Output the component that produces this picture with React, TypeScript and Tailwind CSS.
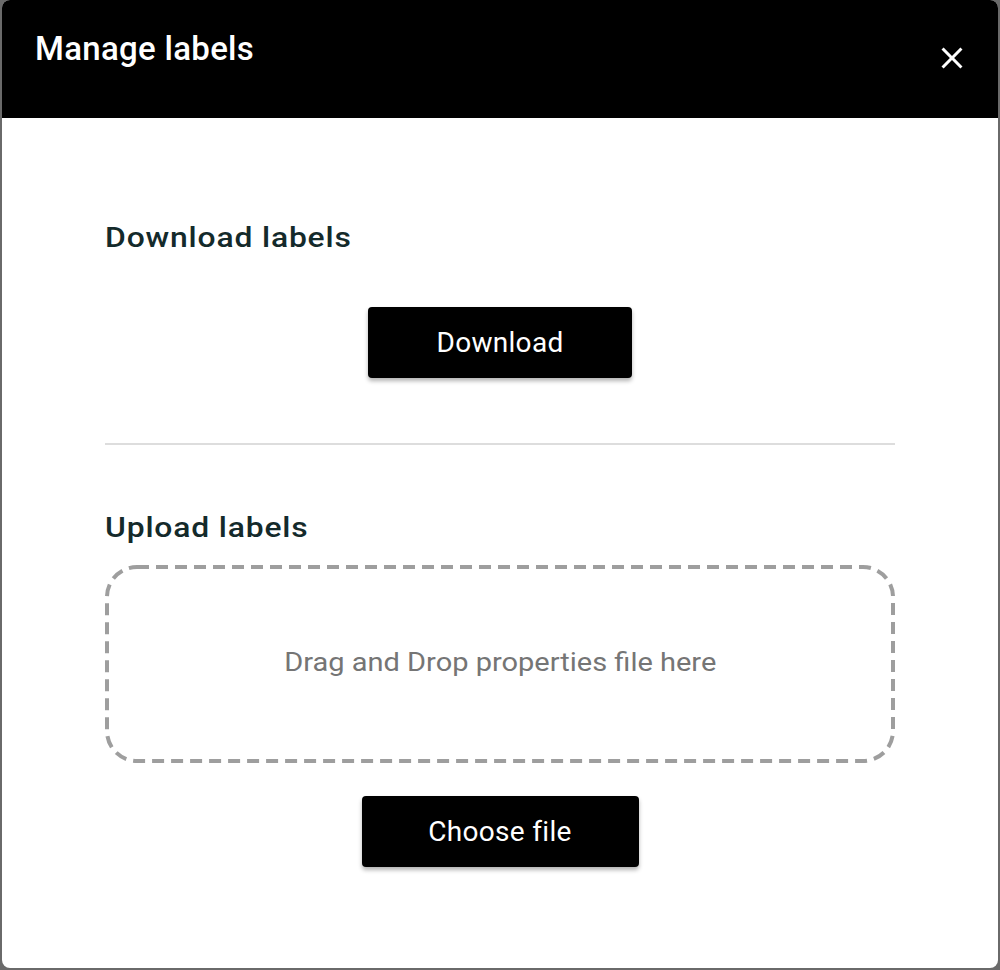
import React from "react";

function CloseIcon() {
  return (
    <svg width="36" height="36" viewBox="0 0 24 24" fill="white" aria-hidden="true">
      <path d="M19 6.41L17.59 5 12 10.59 6.41 5 5 6.41 10.59 12 5 17.59 6.41 19 12 13.41 17.59 19 19 17.59 13.41 12z" />
    </svg>
  );
}

export default function App() {
  return (
    <div
      className="h-[970px] w-[1000px] bg-[#6a6a6a] pl-[2px] pr-[2px] pb-[2px]"
      style={{ fontFamily: "Roboto, 'Noto Sans', sans-serif" }}
    >
      <div className="flex h-full flex-col overflow-hidden rounded-lg bg-white">
        <header className="flex h-[118px] shrink-0 items-start justify-between bg-black pl-[33px] pr-[28px]">
          <h1 className="mt-[32px] text-[33px] font-medium leading-none tracking-[0.3px] text-white">Manage labels</h1>
          <button className="mt-[40px] flex items-center justify-center">
            <CloseIcon />
          </button>
        </header>
        <main className="flex flex-col px-[103px] pt-[104px]">
          <h2 className="text-[27px] font-medium leading-[32px] text-[#142a2b]">
            <span className="inline-block origin-left scale-x-[1.18] tracking-[0.7px]">Download labels</span>
          </h2>
          <div className="mt-[53px] flex justify-center">
            <button className="h-[71px] w-[264px] rounded-[4px] bg-black text-[28px] tracking-[0.3px] text-white shadow-[0_3px_4px_rgba(0,0,0,0.3)]">
              Download
            </button>
          </div>
          <div className="mt-[65px] h-[2px] bg-[#dddddd]" />
          <h2 className="mt-[67px] text-[27px] font-medium leading-[32px] text-[#142a2b]">
            <span className="inline-block origin-left scale-x-[1.18] tracking-[0.7px]">Upload labels</span>
          </h2>
          <div className="relative mt-[21px] flex h-[198px] items-center justify-center">
            <svg className="absolute inset-0 h-full w-full" width="790" height="198" aria-hidden="true">
              <rect
                x="2"
                y="2"
                width="786"
                height="194"
                rx="30"
                ry="30"
                fill="none"
                stroke="#9e9e9e"
                strokeWidth="4"
                strokeDasharray="12 7"
              />
            </svg>
            <span className="relative mb-[2px] inline-block scale-x-[1.16] text-[25px] text-[#757575]">
              Drag and Drop properties file here
            </span>
          </div>
          <div className="mt-[33px] flex justify-center">
            <button className="h-[71px] w-[277px] rounded-[4px] bg-black text-[28px] tracking-[0.3px] text-white shadow-[0_3px_4px_rgba(0,0,0,0.3)]">
              Choose file
            </button>
          </div>
        </main>
      </div>
    </div>
  );
}
